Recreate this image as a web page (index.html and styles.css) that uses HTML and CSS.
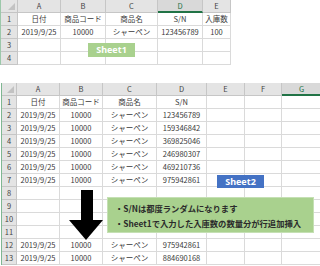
FILE: index.html
```html
<!DOCTYPE html>
<html lang="ja">
<head>
    <meta charset="UTF-8">
    <title>Sheet1 / Sheet2</title>
    <link rel="stylesheet" href="styles.css">
</head>
<body>
<div class="page">
    <!-- Sheet1: input -->
    <div class="sheet sheet-top">
        <div class="corner"></div><div class="col">A</div><div class="col">B</div><div class="col">C</div><div class="col selected">D</div><div class="col">E</div>
        <div class="row">1</div><div>日付</div><div>商品コード</div><div>商品名</div><div>S/N</div><div>入庫数</div>
        <div class="row">2</div><div>2019/9/25</div><div>10000</div><div>シャーペン</div><div>123456789</div><div>100</div>
        <div class="row">3</div><div></div><div></div><div></div><div></div><div></div>
        <div class="row">4</div><div></div><div></div><div></div><div></div><div></div>
    </div>

    <!-- Sheet2: output -->
    <div class="sheet sheet-bottom">
        <div class="corner"></div><div class="col">A</div><div class="col">B</div><div class="col">C</div><div class="col">D</div><div class="col">E</div><div class="col">F</div><div class="col selected">G</div>
        <div class="row">1</div><div>日付</div><div>商品コード</div><div>商品名</div><div>S/N</div><div></div><div></div><div></div>
        <div class="row">2</div><div>2019/9/25</div><div>10000</div><div>シャーペン</div><div>123456789</div><div></div><div></div><div></div>
        <div class="row">3</div><div>2019/9/25</div><div>10000</div><div>シャーペン</div><div>159346842</div><div></div><div></div><div></div>
        <div class="row">4</div><div>2019/9/25</div><div>10000</div><div>シャーペン</div><div>369825046</div><div></div><div></div><div></div>
        <div class="row">5</div><div>2019/9/25</div><div>10000</div><div>シャーペン</div><div>246980307</div><div></div><div></div><div></div>
        <div class="row">6</div><div>2019/9/25</div><div>10000</div><div>シャーペン</div><div>469210736</div><div></div><div></div><div></div>
        <div class="row">7</div><div>2019/9/25</div><div>10000</div><div>シャーペン</div><div>975942861</div><div></div><div></div><div></div>
        <div class="row">8</div><div></div><div></div><div></div><div></div><div></div><div></div><div></div>
        <div class="row">9</div><div></div><div></div><div></div><div></div><div></div><div></div><div></div>
        <div class="row">10</div><div></div><div></div><div></div><div></div><div></div><div></div><div></div>
        <div class="row">11</div><div></div><div></div><div></div><div></div><div></div><div></div><div></div>
        <div class="row">12</div><div>2019/9/25</div><div>10000</div><div>シャーペン</div><div>975942861</div><div></div><div></div><div></div>
        <div class="row">13</div><div>2019/9/25</div><div>10000</div><div>シャーペン</div><div>884690168</div><div></div><div></div><div></div>
    </div>

    <!-- labels and notes laid over the sheets -->
    <div class="tag tag-green">Sheet1</div>
    <div class="tag tag-blue">Sheet2</div>

    <svg class="arrow" width="34" height="50" viewBox="0 0 34 50">
        <rect x="12" y="0" width="12" height="31" fill="#000"/>
        <polygon points="0,30 34,30 17,50" fill="#000"/>
    </svg>

    <div class="note">
        <p>・S/Nは都度ランダムになります</p>
        <p>・Sheet1で入力した入庫数の数量分が行追加挿入</p>
    </div>
</div>
</body>
</html>
```

FILE: styles.css
```css
body {
    margin: 0;
    background: #fff;
    font-family: "Noto Sans CJK JP", "Noto Sans", sans-serif;
}
.page {
    position: relative;
    width: 320px;
    height: 266px;
    overflow: hidden;
}
.sheet {
    display: grid;
    grid-auto-rows: 13px;
    font-size: 7.5px;
    color: #3a3a3a;
}
.sheet > div {
    box-sizing: border-box;
    border-right: 1px solid #dadada;
    border-bottom: 1px solid #dadada;
    line-height: 12px;
    text-align: center;
    white-space: nowrap;
    overflow: hidden;
}
.sheet-top {
    grid-template-columns: 17px 43px 45px 52px 45px 28px;
    width: 230px;
    border-left: 1px solid #9cc8aa;
}
.sheet-bottom {
    grid-template-columns: 15px 43px 43px 54px 50px 38px 37px 40px;
    margin-top: 18px;
    margin-left: 1px;
    border-left: 1px solid #7fb792;
}
.sheet > .corner {
    background: #e4e4e4;
    border-color: #c4c4c4;
    position: relative;
}
.corner::after {
    content: "";
    position: absolute;
    right: 2px;
    bottom: 2px;
    border-left: 7px solid transparent;
    border-bottom: 7px solid #c2c2c2;
}
.sheet > .col {
    background: #e4e4e4;
    border-color: #c6c6c6;
    color: #444;
}
.sheet > .col.selected {
    background: #d9d9d9;
    color: #217346;
    border-bottom: 2px solid #217346;
}
.sheet > .row {
    background: #e4e4e4;
    border-color: #c6c6c6;
    color: #444;
    text-align: center;
}
.tag {
    position: absolute;
    width: 47px;
    height: 14px;
    line-height: 14px;
    text-align: center;
    color: #fff;
    font-family: "Noto Sans", sans-serif;
    font-weight: bold;
    font-size: 9px;
}
.tag-green {
    left: 88px;
    top: 43px;
    background: #a9d18e;
}
.tag-blue {
    left: 217px;
    top: 175px;
    height: 13px;
    line-height: 13px;
    background: #4472c4;
}
.arrow {
    position: absolute;
    left: 69px;
    top: 190px;
}
.note {
    position: absolute;
    left: 107px;
    top: 197px;
    width: 207px;
    height: 36px;
    box-sizing: border-box;
    padding: 3px 0 0 7px;
    background: #a9d18e;
    border: 1px solid #c5e0b4;
    color: #2b2b2b;
    font-size: 8.3px;
    font-weight: bold;
}
.note p {
    margin: 0;
    line-height: 15px;
    white-space: nowrap;
}
```
